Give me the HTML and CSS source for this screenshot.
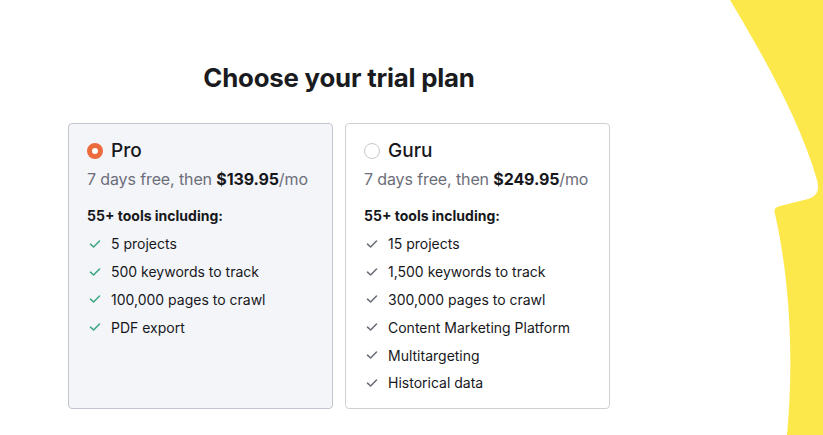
FILE: index.html
```html
<!DOCTYPE html>
<html>
<head>
<meta charset="utf-8">
<link rel="stylesheet" href="styles.css">
</head>
<body>
<svg class="blob" width="110" height="435" viewBox="713 0 110 435" aria-hidden="true">
  <path d="M730 0 C760 50 800 120 817 180 C820 192 816 196 808 199 L780 206 C774 208 774 210 775 214 C790 280 794 360 787 435 L823 435 L823 0 Z" fill="#fde84c"/>
</svg>
<main class="page">
  <h1 class="title">Choose your trial plan</h1>
  <div class="plans">
    <section class="plan plan--active">
      <div class="plan-head"><span class="radio radio--on"></span><span class="plan-name">Pro</span></div>
      <p class="price">7 days free, then <b>$139.95</b>/mo</p>
      <p class="tools">55+ tools including:</p>
      <ul class="features features--green">
        <li><svg class="check" viewBox="0 0 12 12"><path d="M1.5 6.2 L4.6 9 L10.5 3" /></svg>5 projects</li>
        <li><svg class="check" viewBox="0 0 12 12"><path d="M1.5 6.2 L4.6 9 L10.5 3" /></svg>500 keywords to track</li>
        <li><svg class="check" viewBox="0 0 12 12"><path d="M1.5 6.2 L4.6 9 L10.5 3" /></svg>100,000 pages to crawl</li>
        <li><svg class="check" viewBox="0 0 12 12"><path d="M1.5 6.2 L4.6 9 L10.5 3" /></svg>PDF export</li>
      </ul>
    </section>
    <section class="plan">
      <div class="plan-head"><span class="radio"></span><span class="plan-name">Guru</span></div>
      <p class="price">7 days free, then <b>$249.95</b>/mo</p>
      <p class="tools">55+ tools including:</p>
      <ul class="features">
        <li><svg class="check" viewBox="0 0 12 12"><path d="M1.5 6.2 L4.6 9 L10.5 3" /></svg>15 projects</li>
        <li><svg class="check" viewBox="0 0 12 12"><path d="M1.5 6.2 L4.6 9 L10.5 3" /></svg>1,500 keywords to track</li>
        <li><svg class="check" viewBox="0 0 12 12"><path d="M1.5 6.2 L4.6 9 L10.5 3" /></svg>300,000 pages to crawl</li>
        <li><svg class="check" viewBox="0 0 12 12"><path d="M1.5 6.2 L4.6 9 L10.5 3" /></svg>Content Marketing Platform</li>
        <li><svg class="check" viewBox="0 0 12 12"><path d="M1.5 6.2 L4.6 9 L10.5 3" /></svg>Multitargeting</li>
        <li><svg class="check" viewBox="0 0 12 12"><path d="M1.5 6.2 L4.6 9 L10.5 3" /></svg>Historical data</li>
      </ul>
    </section>
  </div>
</main>
</body>
</html>
```

FILE: styles.css
```css
html, body {
  margin: 0;
  padding: 0;
  background: #ffffff;
  overflow: hidden;
}
body {
  width: 823px;
  height: 435px;
  position: relative;
  font-family: Inter, "Noto Sans", sans-serif;
  color: #17181c;
}
.blob {
  position: absolute;
  top: 0;
  right: 0;
}
.page {
  width: 542px;
  padding: 62px 0 0 68px;
}
.title {
  margin: 0;
  text-align: center;
  font-size: 25.8px;
  line-height: 32px;
  font-weight: 700;
  letter-spacing: -0.2px;
  color: #1a1b20;
}
.plans {
  display: flex;
  gap: 12px;
  margin-top: 29px;
}
.plan {
  box-sizing: border-box;
  width: 265px;
  height: 286px;
  border: 1px solid #cfd1d7;
  border-radius: 4px;
  background: #ffffff;
  padding: 15px 10px 0 18px;
}
.plan--active {
  background: #f4f5f9;
  border-color: #c3c6ce;
}
.plan-head {
  display: flex;
  align-items: center;
  gap: 8px;
  height: 24px;
}
.radio {
  box-sizing: border-box;
  width: 16px;
  height: 16px;
  border-radius: 50%;
  border: 1px solid #c7c8cd;
  background: #fff;
  display: inline-block;
}
.radio--on {
  border: 5px solid #ec6b3c;
  background: #ffffff;
}
.plan-name {
  font-size: 19px;
  line-height: 24px;
  font-weight: 500;
  color: #17181c;
}
.price {
  margin: 4px 0 0;
  font-size: 16px;
  line-height: 24px;
  letter-spacing: -0.12px;
  white-space: nowrap;
  color: #6c6e79;
}
.price b {
  color: #17181c;
  font-weight: 700;
}
.tools {
  margin: 15px 0 0;
  font-size: 14px;
  line-height: 20px;
  font-weight: 700;
  color: #17181c;
}
.features {
  list-style: none;
  margin: 4px 0 0;
  padding: 0;
}
.features li {
  display: flex;
  align-items: center;
  gap: 10px;
  height: 27.8px;
  font-size: 14px;
  color: #17181c;
}
.check {
  width: 12px;
  height: 12px;
  margin-left: 2px;
  fill: none;
  stroke: #6b6e78;
  stroke-width: 1.6;
  stroke-linecap: round;
  stroke-linejoin: round;
}
.features--green .check {
  stroke: #3fa783;
}
```
